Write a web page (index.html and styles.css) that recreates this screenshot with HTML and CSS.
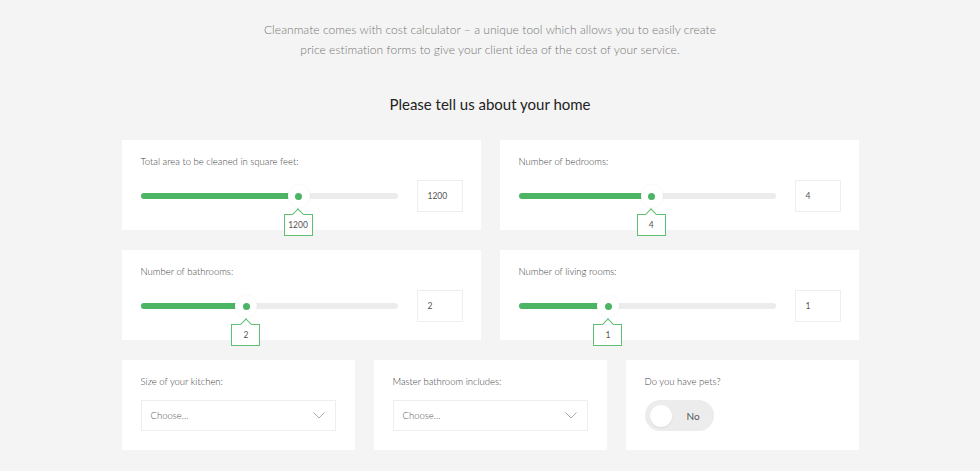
FILE: index.html
```html
<!DOCTYPE html>
<html lang="en">
<head>
  <meta charset="UTF-8">
  <meta name="viewport" content="width=device-width, initial-scale=1.0">
  <title>Cost calculator</title>
  <link rel="stylesheet" href="styles.css">
</head>
<body>
  <div class="page">
    <p class="intro">Cleanmate comes with cost calculator – a unique tool which allows you to easily create<br>price estimation forms to give your client idea of the cost of your service.</p>
    <h2 class="title">Please tell us about your home</h2>

    <div class="row two">
      <div class="card">
        <label class="label">Total area to be cleaned in square feet:</label>
        <div class="slider-row">
          <div class="slider">
            <div class="fill" style="width: 61.5%"></div>
            <div class="thumb" style="left: 61.5%">
              <span class="dot"></span>
              <span class="tip">1200</span>
            </div>
          </div>
          <div class="value">1200</div>
        </div>
      </div>
      <div class="card">
        <label class="label">Number of bedrooms:</label>
        <div class="slider-row">
          <div class="slider">
            <div class="fill" style="width: 51.8%"></div>
            <div class="thumb" style="left: 51.8%">
              <span class="dot"></span>
              <span class="tip">4</span>
            </div>
          </div>
          <div class="value">4</div>
        </div>
      </div>
    </div>

    <div class="row two">
      <div class="card">
        <label class="label">Number of bathrooms:</label>
        <div class="slider-row">
          <div class="slider">
            <div class="fill" style="width: 41.2%"></div>
            <div class="thumb" style="left: 41.2%">
              <span class="dot"></span>
              <span class="tip">2</span>
            </div>
          </div>
          <div class="value">2</div>
        </div>
      </div>
      <div class="card">
        <label class="label">Number of living rooms:</label>
        <div class="slider-row">
          <div class="slider">
            <div class="fill" style="width: 35%"></div>
            <div class="thumb" style="left: 35%">
              <span class="dot"></span>
              <span class="tip">1</span>
            </div>
          </div>
          <div class="value">1</div>
        </div>
      </div>
    </div>

    <div class="row three">
      <div class="card">
        <label class="label">Size of your kitchen:</label>
        <div class="select">
          <span>Choose...</span>
          <svg class="chevron" width="12" height="7" viewBox="0 0 12 7"><path d="M0.5 0.5 L6 6 L11.5 0.5" fill="none" stroke="#aaa" stroke-width="1"/></svg>
        </div>
      </div>
      <div class="card">
        <label class="label">Master bathroom includes:</label>
        <div class="select">
          <span>Choose...</span>
          <svg class="chevron" width="12" height="7" viewBox="0 0 12 7"><path d="M0.5 0.5 L6 6 L11.5 0.5" fill="none" stroke="#aaa" stroke-width="1"/></svg>
        </div>
      </div>
      <div class="card">
        <label class="label">Do you have pets?</label>
        <div class="toggle">
          <span class="knob"></span>
          <span class="toggle-text">No</span>
        </div>
      </div>
    </div>
  </div>
</body>
</html>
```

FILE: styles.css
```css
body {
  margin: 0;
  background-color: #f4f4f4;
  font-family: Lato, "Open Sans", sans-serif;
  color: #555;
}

.page {
  width: 737px;
  margin: 0 auto;
  padding-top: 20px;
}

.intro {
  margin: 0;
  text-align: center;
  font-size: 12px;
  line-height: 20px;
  font-weight: 300;
  color: #777;
  letter-spacing: 0.05px;
}

.title {
  margin: 34px 0 26px;
  text-align: center;
  font-size: 15px;
  line-height: 20px;
  font-weight: 400;
  color: #222;
}

.row {
  display: grid;
  margin-bottom: 20px;
}

.row.two {
  grid-template-columns: 1fr 1fr;
  column-gap: 19px;
}

.row.three {
  grid-template-columns: 1fr 1fr 1fr;
  column-gap: 19px;
}

.card {
  background: #fff;
  height: 90px;
  box-sizing: border-box;
  padding: 16px 18px 0 19px;
}

.label {
  display: block;
  font-size: 9.5px;
  line-height: 12px;
  font-weight: 300;
  color: #444;
  margin-bottom: 12px;
}

/* slider */
.slider-row {
  display: flex;
  align-items: center;
  gap: 19px;
  height: 32px;
}

.slider {
  flex: 1;
  position: relative;
  height: 6px;
  border-radius: 3px;
  background: #ececec;
}

.fill {
  height: 100%;
  border-radius: 3px;
  background: #4cb564;
}

.thumb {
  position: absolute;
  top: 50%;
  width: 22px;
  height: 22px;
  margin: -11px 0 0 -11px;
  border-radius: 50%;
  background: #fff;
  box-shadow: 0 0 2px rgba(0, 0, 0, 0.08);
  display: flex;
  align-items: center;
  justify-content: center;
}

.dot {
  width: 7px;
  height: 7px;
  border-radius: 50%;
  background: #4cb564;
}

.tip {
  position: absolute;
  top: 29px;
  left: 50%;
  width: 29px;
  height: 22px;
  margin-left: -15px;
  border: 1px solid #5cbf72;
  background: #fff;
  box-sizing: border-box;
  font-size: 8.5px;
  line-height: 20px;
  text-align: center;
  color: #555;
}

.tip::before {
  content: "";
  position: absolute;
  top: -5px;
  left: 50%;
  width: 7px;
  height: 7px;
  margin-left: -4px;
  background: #fff;
  border-top: 1px solid #5cbf72;
  border-left: 1px solid #5cbf72;
  transform: rotate(45deg);
}

.value {
  width: 46px;
  height: 32px;
  box-sizing: border-box;
  border: 1px solid #eee;
  padding-left: 10px;
  font-size: 8.5px;
  line-height: 30px;
  color: #555;
}

/* select */
.select {
  width: 195px;
  height: 31px;
  box-sizing: border-box;
  border: 1px solid #eee;
  display: flex;
  align-items: center;
  justify-content: space-between;
  padding: 0 10px 0 9px;
  font-size: 9.5px;
  font-weight: 300;
  color: #555;
}

/* toggle */
.toggle {
  width: 69px;
  height: 31px;
  border-radius: 16px;
  background: #ececec;
  display: flex;
  align-items: center;
  box-sizing: border-box;
  padding-left: 5px;
}

.knob {
  width: 22px;
  height: 22px;
  border-radius: 50%;
  background: #fff;
  box-shadow: 0 1px 2px rgba(0, 0, 0, 0.08);
}

.toggle-text {
  margin-left: 15px;
  font-size: 10px;
  color: #555;
}
```
